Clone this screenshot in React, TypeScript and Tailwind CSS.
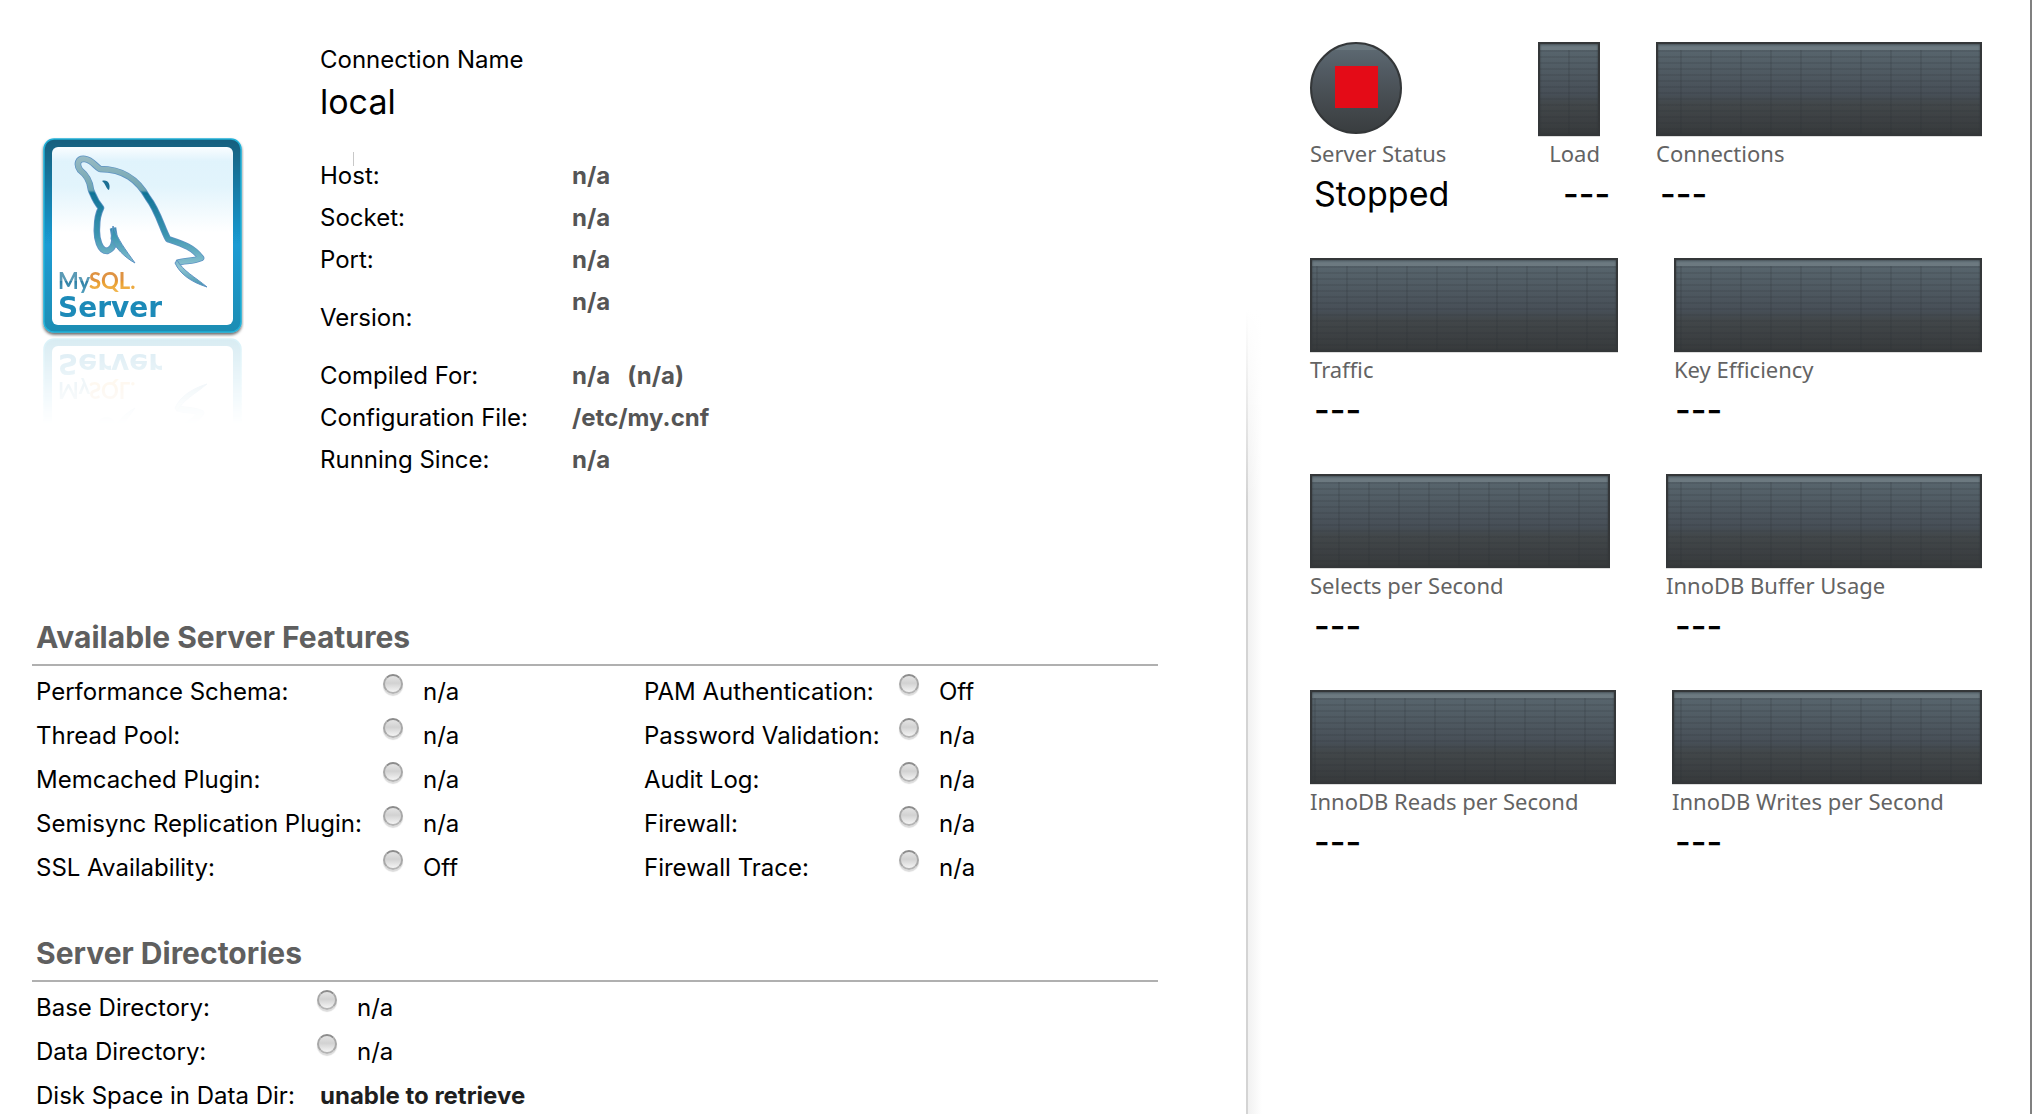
import React from "react";

const BODY =
  "M73 92 C75 102 76 112 67 115 C60 115 56 103 57 91 C57 83 58 78 61 72 C55 65 54 61 51 54 C50 43 45 38 40 34 C36 28 38 22 45 23 C52 24 55 30 60 33 C84 33 98 44 108 62 C118 75 122 92 128 103 C143 108 153 111 161 122 C152 126 144 124 137 127";

function Badge() {
  return (
    <g>
      <rect x="4" y="3" width="197" height="193" rx="10" fill="url(#frame)" stroke="#22b1d8" strokeWidth="1.5" />
      <rect x="12" y="11" width="181" height="178" rx="6" fill="url(#sky)" />
      <g fill="none" strokeLinejoin="round">
        <path d={BODY} stroke="#5d93c4" strokeWidth="6.6" />
        <path d={BODY} stroke="url(#skin)" strokeWidth="5" />
      </g>
      <path
        d="M73 90 C78 104 85 113 95 127 C84 121 76 112 71 103 Z M137 124 C143 135 155 141 167 151 C151 146 140 138 135 127 Z"
        fill="url(#skin)"
        stroke="#5d93c4"
        strokeWidth="1"
      />
      <path d="M62 45 C68 43 71 49 69 54 C66 53 66 48 62 45 Z" fill="#1f6f94" />
      <g fontSize="22" fontWeight="700" fontFamily="Lato, sans-serif">
        <text x="18" y="153" fill="url(#my)">My</text>
        <text x="49" y="153" fill="url(#sql)">SQL.</text>
      </g>
      <text x="18" y="181" fontSize="28" fontWeight="700" fontFamily="'DejaVu Sans', sans-serif" fill="#1e8ab8">
        Server
      </text>
    </g>
  );
}

function Logo() {
  return (
    <svg viewBox="0 0 204 288" className="mt-[94px] h-72 w-51 shrink-0" role="img" aria-label="MySQL Server">
      <defs>
        <linearGradient id="frame" x1="0" y1="0" x2="0" y2="1">
          <stop offset="0" stopColor="#145f7d" />
          <stop offset="0.55" stopColor="#1a9bd3" />
          <stop offset="1" stopColor="#1b8db3" />
        </linearGradient>
        <linearGradient id="sky" x1="0" y1="0" x2="0" y2="1">
          <stop offset="0" stopColor="#fafdff" />
          <stop offset="0.08" stopColor="#e0f3fc" />
          <stop offset="0.22" stopColor="#e2f4fc" />
          <stop offset="0.48" stopColor="#ffffff" />
        </linearGradient>
        <linearGradient id="skin" gradientUnits="userSpaceOnUse" x1="0" y1="18" x2="0" y2="152">
          <stop offset="0" stopColor="#9bbcc4" />
          <stop offset="0.27" stopColor="#6fa4b1" />
          <stop offset="0.29" stopColor="#0f7296" />
          <stop offset="0.6" stopColor="#3b94b0" />
          <stop offset="0.85" stopColor="#8fc5d2" />
          <stop offset="1" stopColor="#3f92ad" />
        </linearGradient>
        <linearGradient id="my" x1="0" y1="0" x2="0" y2="1">
          <stop offset="0.5" stopColor="#5a9ab5" />
          <stop offset="0.52" stopColor="#2e7fa5" />
          <stop offset="1" stopColor="#57a3c0" />
        </linearGradient>
        <linearGradient id="sql" x1="0" y1="0" x2="0" y2="1">
          <stop offset="0.5" stopColor="#df9343" />
          <stop offset="0.52" stopColor="#e79a2c" />
          <stop offset="1" stopColor="#f4bd58" />
        </linearGradient>
        <linearGradient id="fade" gradientUnits="userSpaceOnUse" x1="0" y1="202" x2="0" y2="288">
          <stop offset="0" stopColor="#fff" stopOpacity="0.17" />
          <stop offset="1" stopColor="#fff" stopOpacity="0" />
        </linearGradient>
        <mask id="reflection" maskUnits="userSpaceOnUse" x="0" y="201" width="204" height="87">
          <rect x="0" y="201" width="204" height="87" fill="url(#fade)" />
        </mask>
        <filter id="shadow" x="-5%" y="-5%" width="110%" height="112%">
          <feDropShadow dx="0" dy="2" stdDeviation="1.5" floodColor="#000" floodOpacity="0.6" />
        </filter>
      </defs>
      <g filter="url(#shadow)">
        <Badge />
      </g>
      <g mask="url(#reflection)">
        <g transform="translate(0 399) scale(1 -1)" aria-hidden="true">
          <Badge />
        </g>
      </g>
    </svg>
  );
}

function InfoRow({ label, value, tall = false }: { label: string; value: string; tall?: boolean }) {
  return (
    <div className={tall ? "flex h-[74px]" : "flex h-[42px]"}>
      <dt className="w-[252px] shrink-0 self-center leading-[42px]">{label}</dt>
      <dd className="leading-[42px] font-bold whitespace-pre text-[#555555]">{value}</dd>
    </div>
  );
}

function Lamp({ id }: { id: string }) {
  return (
    <input
      id={id}
      type="radio"
      readOnly
      className="mt-1 size-5 shrink-0 appearance-none rounded-full border-2 border-x-[#a8a8a8] border-t-[#8c8c8c] border-b-[#b4b4b4] bg-linear-to-b from-[#e4e4e4] via-[#d2d2d2] via-45% to-[#f4f4f4] shadow-[0_2px_1px_#dcdcdc]"
    />
  );
}

function LampRow({ label, value, labelWidth }: { label: string; value: string; labelWidth: string }) {
  const id = label.replace(/[^A-Za-z]/g, "");
  return (
    <div className="flex h-11 leading-11">
      <label htmlFor={id} className={`${labelWidth} shrink-0 whitespace-nowrap`}>
        {label}
      </label>
      <Lamp id={id} />
      <span className="ml-5">{value}</span>
    </div>
  );
}

function Section({ title, children }: { title: string; children: React.ReactNode }) {
  return (
    <section>
      <h2 className="border-b-2 border-[#b0b0b0] px-1 pb-[7px] text-[30px] leading-10 font-bold text-[#5f5f5f]">
        {title}
      </h2>
      <div className="px-1 pt-1">{children}</div>
    </section>
  );
}

const FEATURES_A = [
  ["Performance Schema:", "n/a"],
  ["Thread Pool:", "n/a"],
  ["Memcached Plugin:", "n/a"],
  ["Semisync Replication Plugin:", "n/a"],
  ["SSL Availability:", "Off"],
];

const FEATURES_B = [
  ["PAM Authentication:", "Off"],
  ["Password Validation:", "n/a"],
  ["Audit Log:", "n/a"],
  ["Firewall:", "n/a"],
  ["Firewall Trace:", "n/a"],
];

function Graph() {
  return (
    <div className="h-[94px] border-2 border-[#343739] bg-[linear-gradient(to_bottom,#5b6971_0px,#64727a_2px,#6c7980_3px,#6c7980_6px,transparent_6px),repeating-linear-gradient(to_left,transparent_0px,transparent_28px,rgba(40,45,50,0.16)_28px,rgba(40,45,50,0.16)_30px),repeating-linear-gradient(to_bottom,rgba(40,45,50,0.14)_0px,rgba(40,45,50,0.14)_2px,transparent_2px,transparent_6px),linear-gradient(to_bottom,#5a6770_0px,#525e66_20px,#474f57_50px,#42474a_60px,#373a3c_90px)] shadow-[inset_0_0_2px_#343739,0_1px_0_#dddddd]" />
  );
}

function GaugeLabel({ children, right = false }: { children: string; right?: boolean }) {
  return (
    <div
      className={`mt-0.5 font-['Noto_Sans','Open_Sans',sans-serif] text-[22px] leading-[30px] whitespace-nowrap text-[#636363] ${
        right ? "text-right" : ""
      }`}
    >
      {children}
    </div>
  );
}

function StatusIcon() {
  return (
    <svg viewBox="0 0 92 92" className="block size-[92px]" role="img" aria-label="Server stopped">
      <defs>
        <linearGradient id="disc" x1="0" y1="0" x2="0" y2="1">
          <stop offset="0" stopColor="#5f6c75" />
          <stop offset="0.3" stopColor="#525b63" />
          <stop offset="0.6" stopColor="#474d52" />
          <stop offset="1" stopColor="#393d3f" />
        </linearGradient>
        <clipPath id="cap">
          <rect width="92" height="8" />
        </clipPath>
      </defs>
      <circle cx="46" cy="46" r="45" fill="url(#disc)" />
      <circle cx="46" cy="46" r="45" fill="#6c7980" clipPath="url(#cap)" />
      <circle cx="46" cy="46" r="45" fill="none" stroke="#343739" strokeWidth="2" />
      <rect x="25" y="24" width="43" height="42" fill="#e40b17" />
    </svg>
  );
}

function GaugeRow({ gauges }: { gauges: { label: string; size: string }[] }) {
  return (
    <div>
      <div className="flex gap-14">
        {gauges.map((g) => (
          <div key={g.label} className={g.size}>
            <Graph />
            <GaugeLabel>{g.label}</GaugeLabel>
          </div>
        ))}
      </div>
      <div className="mt-1 grid grid-cols-[361px_1fr] pl-1 text-[34px] leading-11 font-medium">
        <span>---</span>
        <span>---</span>
      </div>
    </div>
  );
}

export default function App() {
  return (
    <div className="flex h-screen overflow-hidden bg-white font-['Inter','Liberation_Sans',sans-serif] text-2xl text-black">
      <main className="min-w-0 flex-1 pt-[42px] pr-[88px] pl-8">
        <div className="flex gap-19 pl-2">
          <Logo />
          <div>
            <div className="leading-9">Connection Name</div>
            <h1 className="text-[34px] leading-12">local</h1>
            <dl className="relative mt-[29px]">
              <span className="absolute -top-[3px] left-[33px] h-3.5 w-px bg-[#c8c8c8]" />
              <InfoRow label="Host:" value="n/a" />
              <InfoRow label="Socket:" value="n/a" />
              <InfoRow label="Port:" value="n/a" />
              <InfoRow label="Version:" value="n/a" tall />
              <InfoRow label="Compiled For:" value="n/a   (n/a)" />
              <InfoRow label="Configuration File:" value="/etc/my.cnf" />
              <InfoRow label="Running Since:" value="n/a" />
            </dl>
          </div>
        </div>

        <div className="mt-34 flex flex-col gap-[43px]">
          <Section title="Available Server Features">
            <div className="flex">
              <div className="w-[608px] shrink-0">
                {FEATURES_A.map(([l, v]) => (
                  <LampRow key={l} label={l} value={v} labelWidth="w-[347px]" />
                ))}
              </div>
              <div>
                {FEATURES_B.map(([l, v]) => (
                  <LampRow key={l} label={l} value={v} labelWidth="w-[255px]" />
                ))}
              </div>
            </div>
          </Section>

          <Section title="Server Directories">
            <LampRow label="Base Directory:" value="n/a" labelWidth="w-[281px]" />
            <LampRow label="Data Directory:" value="n/a" labelWidth="w-[281px]" />
            <div className="flex leading-11">
              <span className="w-[284px] shrink-0 whitespace-nowrap">Disk Space in Data Dir:</span>
              <span className="font-bold text-[#1f1f1f]">unable to retrieve</span>
            </div>
          </Section>
        </div>
      </main>

      <div className="flex w-4 shrink-0 pt-[310px]">
        <div className="w-0.5 bg-[linear-gradient(to_bottom,#ffffff_0px,#d4d4d4_190px)]" />
        <div className="flex-1 bg-[linear-gradient(to_bottom,#ffffff_0px,transparent_190px),linear-gradient(to_right,#f1f1f1,#ffffff)]" />
      </div>

      <aside className="flex w-[770px] shrink-0 flex-col gap-[42px] border-r-2 border-[#808080] pt-[42px] pr-12 pl-12">
        <div>
          <div className="flex">
            <div className="w-[228px] shrink-0">
              <div className="h-[94px]">
                <StatusIcon />
              </div>
              <GaugeLabel>Server Status</GaugeLabel>
            </div>
            <div className="w-[62px] shrink-0">
              <Graph />
              <GaugeLabel right>Load</GaugeLabel>
            </div>
            <div className="ml-14 flex-1">
              <Graph />
              <GaugeLabel>Connections</GaugeLabel>
            </div>
          </div>
          <div className="mt-1 grid grid-cols-[249px_97px_1fr] pl-1 text-[34px] leading-11">
            <span>Stopped</span>
            <span className="font-medium">---</span>
            <span className="font-medium">---</span>
          </div>
        </div>
        <GaugeRow
          gauges={[
            { label: "Traffic", size: "flex-[308]" },
            { label: "Key Efficiency", size: "flex-[308]" },
          ]}
        />
        <GaugeRow
          gauges={[
            { label: "Selects per Second", size: "flex-[300]" },
            { label: "InnoDB Buffer Usage", size: "flex-[316]" },
          ]}
        />
        <GaugeRow
          gauges={[
            { label: "InnoDB Reads per Second", size: "flex-[306]" },
            { label: "InnoDB Writes per Second", size: "flex-[310]" },
          ]}
        />
      </aside>
    </div>
  );
}
